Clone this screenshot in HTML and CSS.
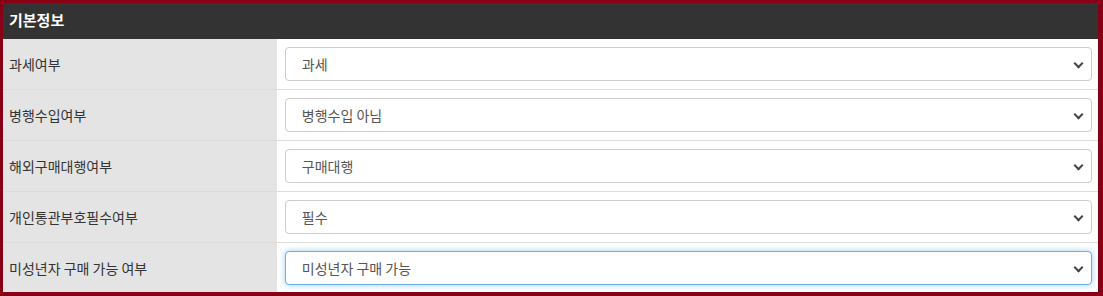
FILE: index.html
```html
<!DOCTYPE html>
<html>
<head>
  <meta charset="utf-8">
  <title>기본정보</title>
  <link rel="stylesheet" href="styles.css">
</head>
<body>
  <div class="frame">
    <div class="panel-head">기본정보</div>
    <table class="info">
      <tr>
        <th>과세여부</th>
        <td><div class="select">과세</div></td>
      </tr>
      <tr>
        <th>병행수입여부</th>
        <td><div class="select">병행수입 아님</div></td>
      </tr>
      <tr>
        <th>해외구매대행여부</th>
        <td><div class="select">구매대행</div></td>
      </tr>
      <tr>
        <th>개인통관부호필수여부</th>
        <td><div class="select">필수</div></td>
      </tr>
      <tr>
        <th>미성년자 구매 가능 여부</th>
        <td><div class="select focus">미성년자 구매 가능</div></td>
      </tr>
    </table>
  </div>
</body>
</html>
```

FILE: styles.css
```css
body { margin: 0; font-family: "Noto Sans CJK KR", "Noto Sans", sans-serif; font-size: 14px; color: #333; }
.frame { border-style: solid; border-color: #880015; border-width: 3px 5px 4px 3px; height: 296px; box-sizing: border-box; background: #fff; overflow: hidden; }
.panel-head { background: #333; color: #fff; font-weight: bold; font-size: 15px; height: 36px; line-height: 34px; padding-left: 6px; }
.info { width: 100%; border-collapse: collapse; }
.info tr { border-bottom: 1px solid #ddd; }
.info th { width: 25%; background: #e4e4e4; text-align: left; font-weight: normal; padding: 0 6px; height: 50px; }
.info td { padding: 0 6px 0 8px; }
.select { position: relative; height: 34px; box-sizing: border-box; border: 1px solid #ccc; border-radius: 4px; line-height: 32px; padding-left: 16px; color: #555; background: #fff; }
.select::after { content: ""; position: absolute; right: 9px; top: 12px; width: 5px; height: 5px; border-right: 2px solid #444; border-bottom: 2px solid #444; transform: rotate(45deg); }
.select.focus { border-color: #66afe9; box-shadow: 0 0 6px rgba(102, 175, 233, 0.6); }
```
